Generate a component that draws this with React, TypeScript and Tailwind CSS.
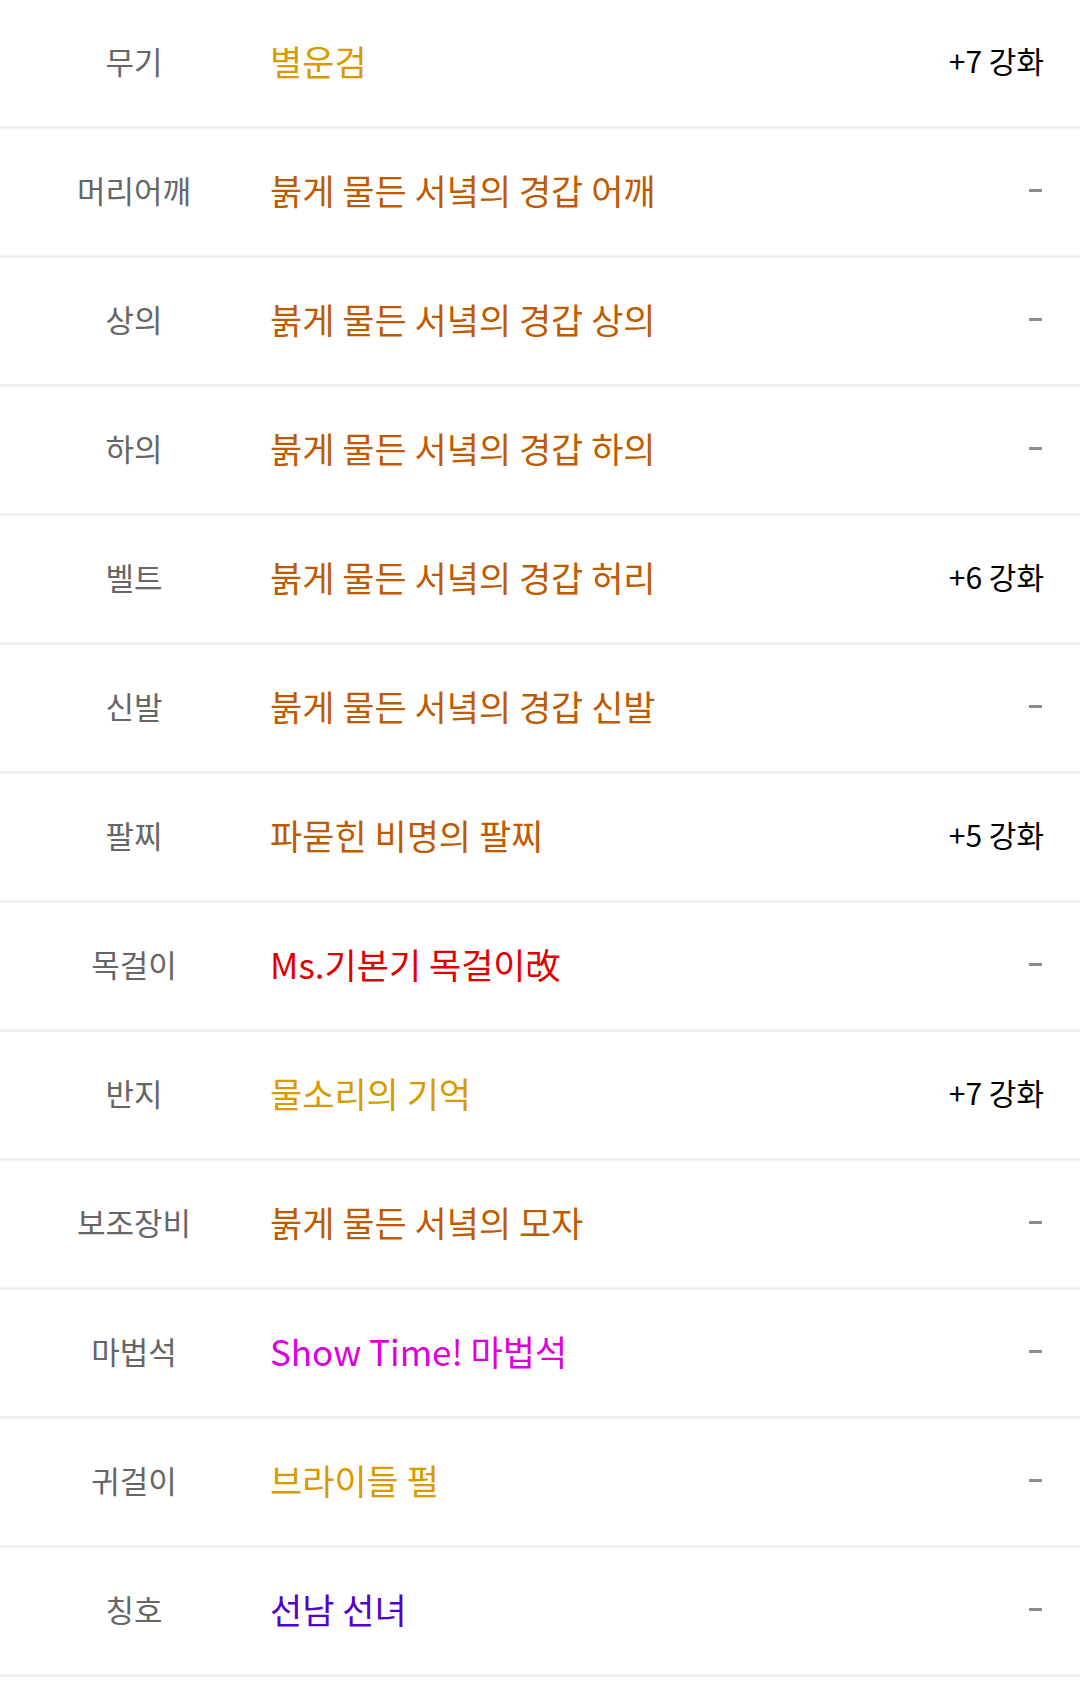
import React from 'react';

type Slot = {
  label: string;
  name: string;
  color: string;
  enhance?: string;
};

const slots: Slot[] = [
  { label: '무기', name: '별운검', color: 'text-[#d99a00]', enhance: '+7 강화' },
  { label: '머리어깨', name: '붉게 물든 서녘의 경갑 어깨', color: 'text-[#bf5a00]' },
  { label: '상의', name: '붉게 물든 서녘의 경갑 상의', color: 'text-[#bf5a00]' },
  { label: '하의', name: '붉게 물든 서녘의 경갑 하의', color: 'text-[#bf5a00]' },
  { label: '벨트', name: '붉게 물든 서녘의 경갑 허리', color: 'text-[#bf5a00]', enhance: '+6 강화' },
  { label: '신발', name: '붉게 물든 서녘의 경갑 신발', color: 'text-[#bf5a00]' },
  { label: '팔찌', name: '파묻힌 비명의 팔찌', color: 'text-[#bf5a00]', enhance: '+5 강화' },
  { label: '목걸이', name: 'Ms.기본기 목걸이改', color: 'text-[#e00000]' },
  { label: '반지', name: '물소리의 기억', color: 'text-[#d99a00]', enhance: '+7 강화' },
  { label: '보조장비', name: '붉게 물든 서녘의 모자', color: 'text-[#bf5a00]' },
  { label: '마법석', name: 'Show Time! 마법석', color: 'text-[#dd00dd]' },
  { label: '귀걸이', name: '브라이들 펄', color: 'text-[#d99a00]' },
  { label: '칭호', name: '선남 선녀', color: 'text-[#5500cc]' },
];

const SlotRow = ({ label, name, color, enhance }: Slot) => {
  return (
    <div className="flex h-[129px] items-center border-b-[3px] border-[#f0f0f0] pb-[6px]">
      <div className="w-[268px] shrink-0 text-center text-[31px] text-[#666666]">{label}</div>
      <div className={`ml-[2px] flex-1 text-[35px] ${color}`}>{name}</div>
      <div className="pr-[36px] text-right">
        {enhance ? (
          <span className="text-[30px] text-black">{enhance}</span>
        ) : (
          <span className="mr-[2px] mt-[3px] block h-[3px] w-[13px] bg-[#8c8c8c]" />
        )}
      </div>
    </div>
  );
};

export default function App() {
  return (
    <div
      className="min-h-[1685px] w-[1080px] bg-white leading-none"
      style={{ fontFamily: '"Noto Sans CJK KR", "Noto Sans", sans-serif' }}
    >
      {slots.map((s) => (
        <SlotRow key={s.label} {...s} />
      ))}
    </div>
  );
}
